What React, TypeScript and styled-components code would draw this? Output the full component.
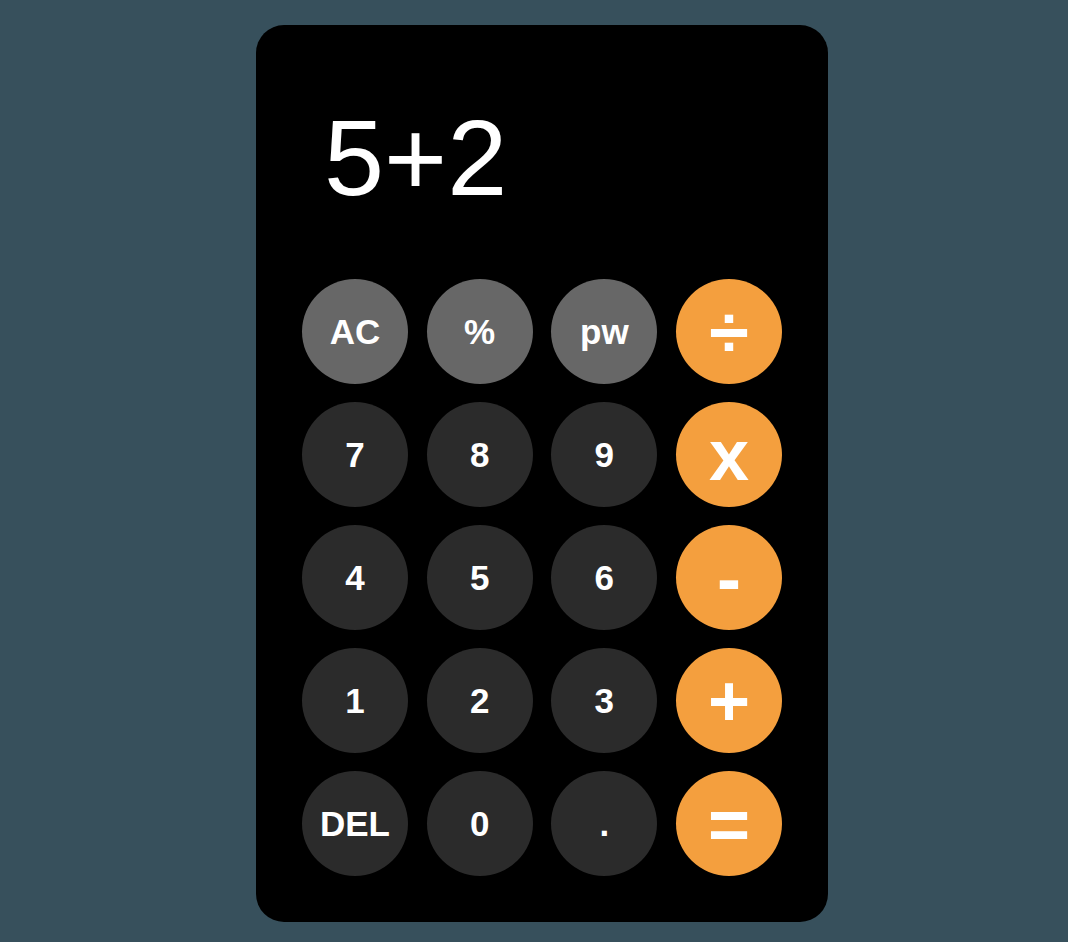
import React, { useState } from "react";
import styled, { createGlobalStyle } from "styled-components";

type Kind = "func" | "digit" | "op";

const keys: { label: string; kind: Kind }[] = [
	{ label: "AC", kind: "func" },
	{ label: "%", kind: "func" },
	{ label: "pw", kind: "func" },
	{ label: "÷", kind: "op" },
	{ label: "7", kind: "digit" },
	{ label: "8", kind: "digit" },
	{ label: "9", kind: "digit" },
	{ label: "x", kind: "op" },
	{ label: "4", kind: "digit" },
	{ label: "5", kind: "digit" },
	{ label: "6", kind: "digit" },
	{ label: "-", kind: "op" },
	{ label: "1", kind: "digit" },
	{ label: "2", kind: "digit" },
	{ label: "3", kind: "digit" },
	{ label: "+", kind: "op" },
	{ label: "DEL", kind: "digit" },
	{ label: "0", kind: "digit" },
	{ label: ".", kind: "digit" },
	{ label: "=", kind: "op" },
];

const App: React.FC = () => {
	const [expr] = useState("5+2");

	return (
		<>
			<GlobalStyle />
			<Page>
				<Calculator>
					<Display>{expr}</Display>
					<Keypad>
						{keys.map((k) => (
							<Key key={k.label} $kind={k.kind}>
								{k.label}
							</Key>
						))}
					</Keypad>
				</Calculator>
			</Page>
		</>
	);
};

export default App;

const GlobalStyle = createGlobalStyle`
	html, body {
		margin: 0;
		background: #37505c;
	}
	* {
		box-sizing: border-box;
	}
`;

const Page = styled.div`
	display: flex;
	justify-content: center;
	padding: 25px 0 20px 16px;
	font-family: "Liberation Sans", Arial, sans-serif;
`;

const Calculator = styled.div`
	width: 572px;
	height: 897px;
	background: #000;
	border-radius: 28px;
	padding: 46px;
	display: flex;
	flex-direction: column;
`;

const Display = styled.div`
	height: 208px;
	padding: 25px 0 0 22px;
	color: #fff;
	font-size: 108px;
	line-height: 124px;
`;

const Keypad = styled.div`
	display: grid;
	grid-template-columns: repeat(4, 106px);
	justify-content: space-between;
	row-gap: 18px;
`;

const colors: Record<Kind, string> = {
	func: "#676767",
	digit: "#2b2b2b",
	op: "#f49f3e",
};

const Key = styled.button<{ $kind: Kind }>`
	width: 106px;
	height: 105px;
	border: none;
	border-radius: 50%;
	padding: 0;
	display: flex;
	align-items: center;
	justify-content: center;
	background: ${(p) => colors[p.$kind]};
	color: #fff;
	font-family: "Liberation Sans", Arial, sans-serif;
	font-weight: bold;
	font-size: ${(p) => (p.$kind === "op" ? "72px" : "35px")};
	cursor: pointer;
`;
